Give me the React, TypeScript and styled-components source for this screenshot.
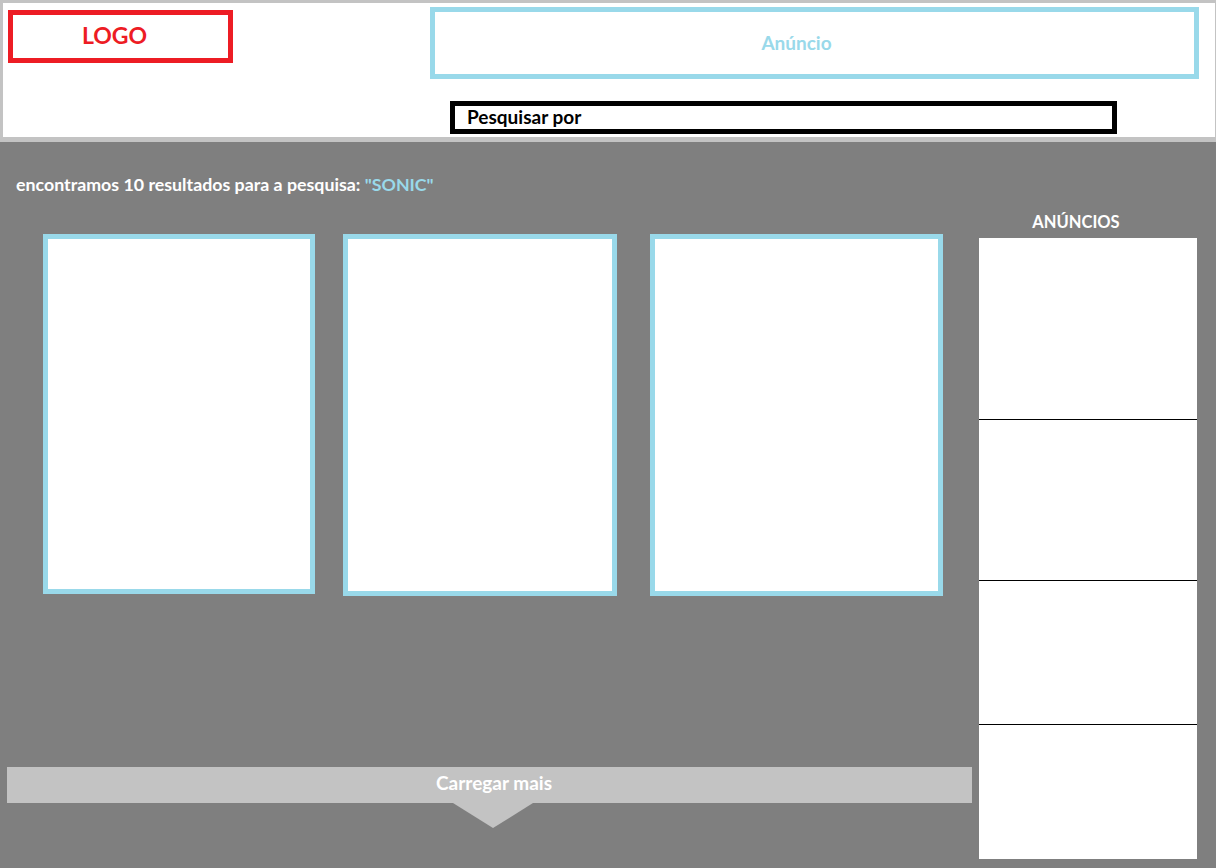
import styled, { createGlobalStyle } from "styled-components";

const GlobalStyle = createGlobalStyle`
  html, body {
    margin: 0;
    padding: 0;
    background: #7f7f7f;
  }
  body {
    font-family: Lato, "Open Sans", sans-serif;
  }
`;

const cards = [
  { w: 272, h: 360, ml: 0 },
  { w: 274, h: 362, ml: 28 },
  { w: 293, h: 362, ml: 33 },
];

const adSlots = [181, 160, 143, 134];

export default function App() {
  return (
    <>
      <GlobalStyle />
      <S.Page>
        <S.Header>
          <S.Logo>LOGO</S.Logo>
          <S.HeaderRight>
            <S.AdBanner>Anúncio</S.AdBanner>
            <S.SearchBox>Pesquisar por</S.SearchBox>
          </S.HeaderRight>
        </S.Header>
        <S.Main>
          <S.Results>
            <S.ResultsText>
              encontramos 10 resultados para a pesquisa:{" "}
              <S.Query>"SONIC"</S.Query>
            </S.ResultsText>
            <S.CardRow>
              {cards.map((c, i) => (
                <S.Card key={i} $w={c.w} $h={c.h} $ml={c.ml} />
              ))}
            </S.CardRow>
            <S.LoadMore>Carregar mais</S.LoadMore>
          </S.Results>
          <S.Sidebar>
            <S.SidebarTitle>ANÚNCIOS</S.SidebarTitle>
            <S.AdPanel>
              {adSlots.map((h, i) => (
                <S.AdSlot key={i} $h={h} $last={i === adSlots.length - 1} />
              ))}
            </S.AdPanel>
          </S.Sidebar>
        </S.Main>
      </S.Page>
    </>
  );
}

const S = {
  Page: styled.div`
    width: 1216px;
    height: 868px;
    display: flex;
    flex-direction: column;
    overflow: hidden;
  `,
  Header: styled.header`
    box-sizing: border-box;
    height: 142px;
    background: #ffffff;
    border-style: solid;
    border-color: #c3c3c3;
    border-width: 3px 1px 5px 3px;
    display: flex;
    align-items: flex-start;
  `,
  Logo: styled.div`
    box-sizing: border-box;
    width: 225px;
    height: 53px;
    margin: 7px 0 0 5px;
    border: 5px solid #ed1c24;
    color: #ed1c24;
    font-weight: 700;
    font-size: 23px;
    display: flex;
    align-items: center;
    justify-content: center;
    padding: 0 12px 4px 0;
  `,
  HeaderRight: styled.div`
    margin: 4px 0 0 197px;
    display: flex;
    flex-direction: column;
  `,
  AdBanner: styled.div`
    box-sizing: border-box;
    width: 769px;
    height: 72px;
    border: 5px solid #99d9ea;
    color: #99d9ea;
    font-weight: 700;
    font-size: 19px;
    display: flex;
    align-items: center;
    justify-content: center;
    padding: 0 36px 2px 0;
  `,
  SearchBox: styled.div`
    box-sizing: border-box;
    width: 667px;
    height: 33px;
    margin: 22px 0 0 20px;
    border: 5px solid #000000;
    color: #000000;
    font-weight: 700;
    font-size: 19px;
    display: flex;
    align-items: center;
    padding: 0 0 3px 12px;
  `,
  Main: styled.main`
    flex: 1;
    background: #7f7f7f;
    display: flex;
    align-items: flex-start;
    gap: 7px;
  `,
  Results: styled.section`
    width: 965px;
    margin-left: 7px;
    display: flex;
    flex-direction: column;
  `,
  ResultsText: styled.div`
    margin: 32px 0 0 9px;
    line-height: 20px;
    font-size: 17.8px;
    font-weight: 700;
    color: #ffffff;
  `,
  Query: styled.span`
    color: #99d9ea;
  `,
  CardRow: styled.div`
    margin: 40px 0 0 36px;
    display: flex;
    align-items: flex-start;
  `,
  Card: styled.div<{ $w: number; $h: number; $ml: number }>`
    box-sizing: border-box;
    width: ${({ $w }) => $w}px;
    height: ${({ $h }) => $h}px;
    margin-left: ${({ $ml }) => $ml}px;
    background: #ffffff;
    border: 5px solid #99d9ea;
  `,
  LoadMore: styled.div`
    position: relative;
    margin-top: 171px;
    height: 36px;
    background: #c3c3c3;
    color: #ffffff;
    font-weight: 700;
    font-size: 19px;
    line-height: 32px;
    text-align: center;
    padding-left: 9px;
    &::after {
      content: "";
      position: absolute;
      left: 446px;
      top: 36px;
      border-left: 40px solid transparent;
      border-right: 40px solid transparent;
      border-top: 25px solid #c3c3c3;
    }
  `,
  Sidebar: styled.aside`
    width: 218px;
    display: flex;
    flex-direction: column;
    align-items: stretch;
  `,
  SidebarTitle: styled.div`
    margin-top: 70px;
    line-height: 20px;
    text-align: center;
    font-size: 16.5px;
    font-weight: 700;
    color: #ffffff;
    padding-right: 24px;
  `,
  AdPanel: styled.div`
    margin-top: 6px;
    background: #ffffff;
    display: flex;
    flex-direction: column;
  `,
  AdSlot: styled.div<{ $h: number; $last: boolean }>`
    height: ${({ $h }) => $h}px;
    border-bottom: ${({ $last }) => ($last ? "none" : "1px solid #000000")};
  `,
};
